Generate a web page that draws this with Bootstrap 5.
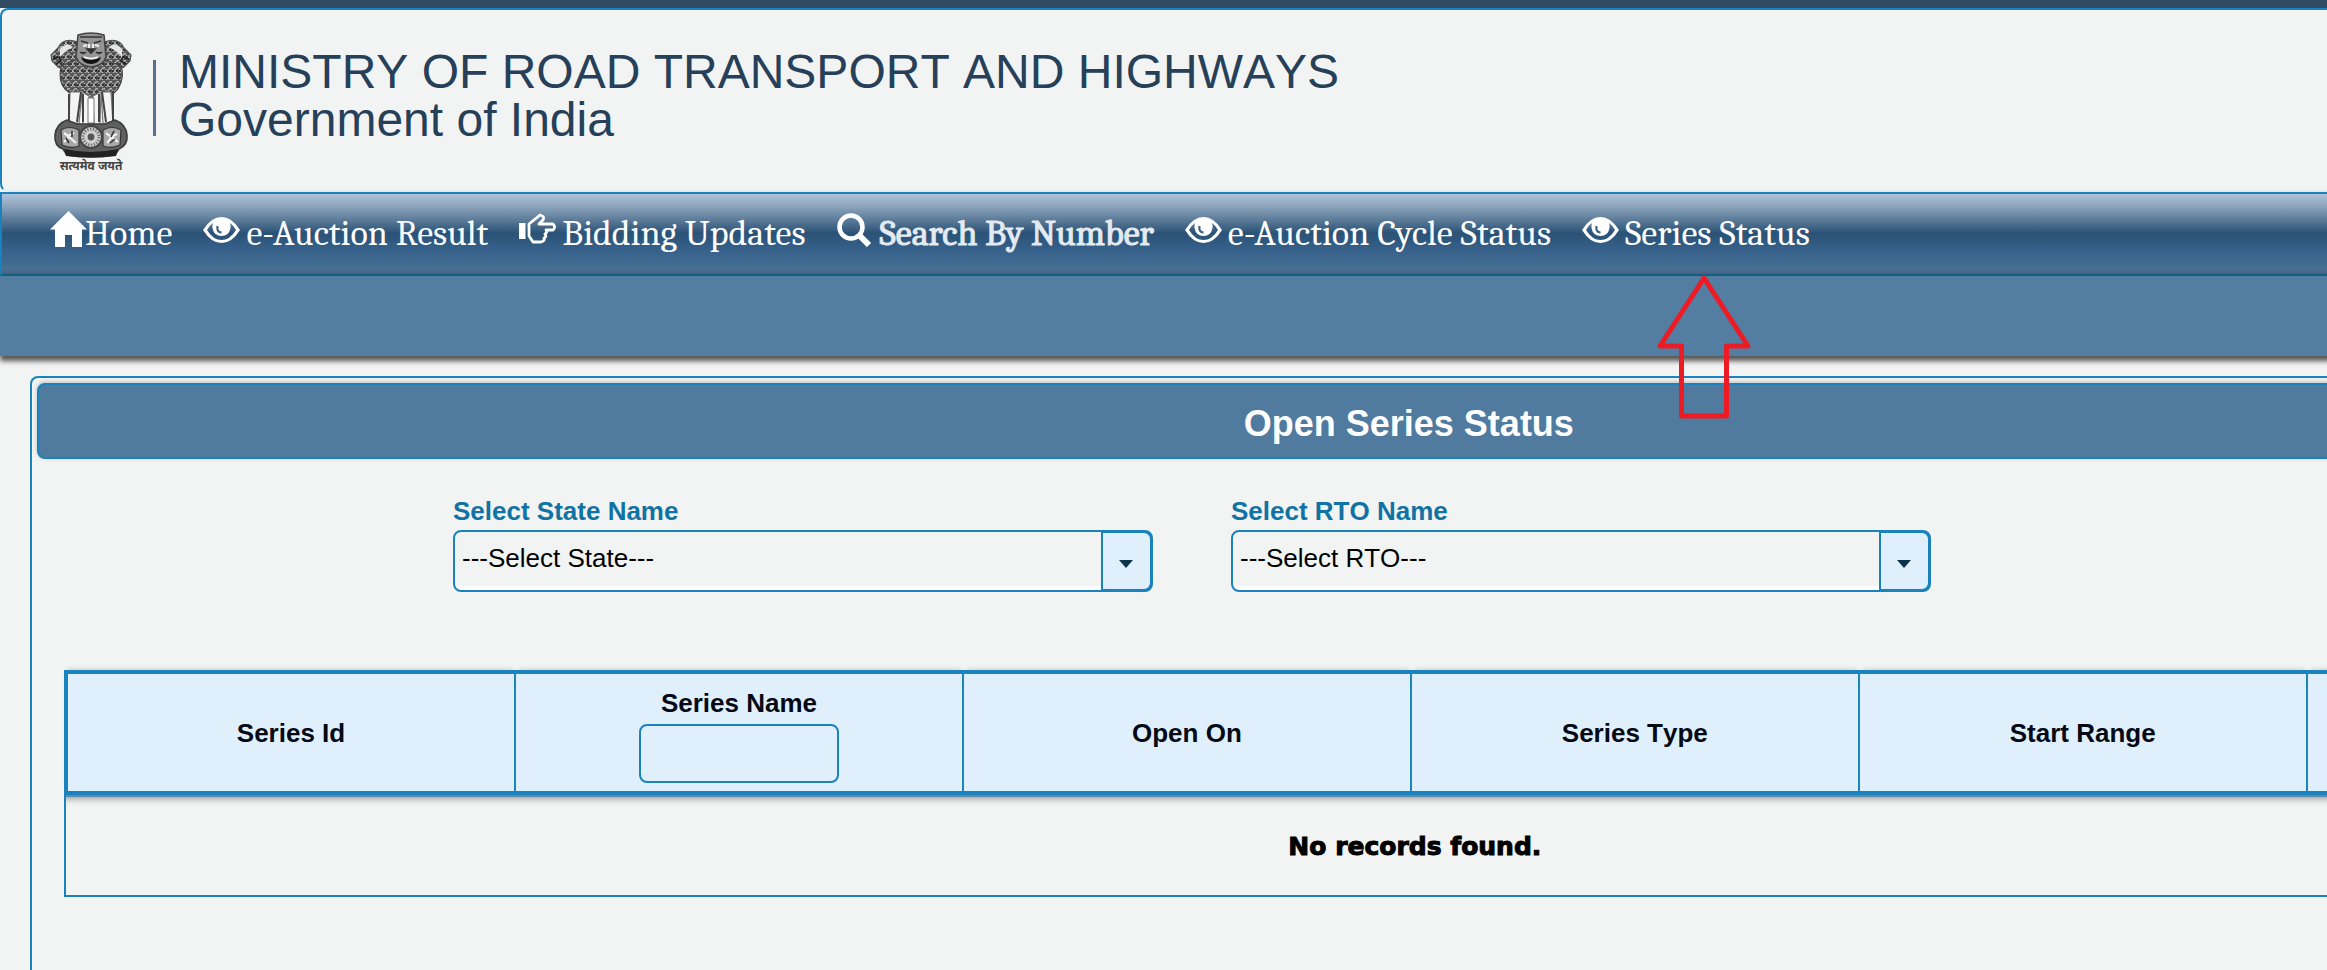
<!DOCTYPE html>
<html lang="en">
<head>
<meta charset="utf-8">
<meta name="viewport" content="width=device-width, initial-scale=1">
<title>Open Series Status</title>
<link href="https://cdn.jsdelivr.net/npm/bootstrap@5.3.0/dist/css/bootstrap.min.css" rel="stylesheet">
<style>
  :root { --edge: #1a82bd; --paper: #f2f4f3; --sky: #dfeffc; }
  body { background: var(--paper); color: #000; font: 26px/30px "Liberation Sans", Arial, sans-serif; font-kerning: none; }
  .page-shell { height: 100vh; }
  .wide { width: 121vw; }
  .top-strip { height: 8px; background: #304a63; }
  .site-head { height: 184px; border: 2px solid var(--edge); border-bottom-color: #e8ebeb; border-radius: 8px; padding-left: 47px; }
  .site-head .rule { width: 3px; height: 76px; background: #587089; margin: 50px 23px 0 20px; }
  .site-head h1 { font-size: 48px; line-height: 48px; color: #27405a; margin: 38px 0 0; font-weight: 400; }
  .emblem { width: 84px; height: 150px; margin-top: 22px; }
  .main-nav { height: 84px; padding: 19px 0 0 48px; border: 2px solid var(--edge); border-bottom-color: #00628c;
    background: linear-gradient(#b1c4dc 0, #8ba3bb 16%, #2b5276 49%, #36618a 70%, #476f94 94%, #4a6480 100%); }
  .main-nav .nav { gap: 31px; }
  .main-nav .nav-link { padding: 0; color: #fff; font: 36px/42px Cambria, Caladea, "Liberation Serif", serif; white-space: nowrap; }
  .main-nav .nav-link.current { color: #e3eaf1; -webkit-text-stroke: 1px #e3eaf1; }
  .main-nav svg.ico { width: 37px; height: 36px; margin: -2px 6px 0 0; flex: none; }
  .main-nav svg.tight { margin-right: -2px; }
  .pointer { position: absolute; left: 74px; top: 60px; width: 96px; height: 146px; z-index: 5; pointer-events: none; }
  .sub-bar { height: 80px; background: #537da1; box-shadow: 2px 3px 5px 2px #555; }
  .panel { margin: 20px 30px 0; padding: 5px; border: 2px solid var(--edge); border-bottom: 0; border-radius: 8px 8px 0 0; }
  .panel-title { margin: 0; height: 76px; padding: 5px 0 0 2px; font-size: 36px; line-height: 40px; font-weight: 700; color: #fff; background: #507a9e;
    border: 2px solid var(--edge); border-radius: 8px; box-shadow: 0 -1px 4px #bbb; }
  .filters { padding: 37px 0 0 416px; gap: 78px; }
  .filter { width: 700px; }
  .filter label { display: block; font-weight: 700; color: #1173a4; margin-bottom: 4px; }
  .combo { position: relative; }
  .combo select { height: 62px; padding: 0 60px 6px 7px; font: inherit; color: #000; border: 2px solid var(--edge); border-radius: 8px;
    background: linear-gradient(var(--paper) 54px, #fff 54px); }
  .combo span { position: absolute; right: 1px; top: 1px; bottom: 1px; width: 51px; border: 2px solid var(--edge); border-radius: 0 8px 8px 0; background: var(--sky); pointer-events: none; }
  .combo span::after { content: ""; position: absolute; left: 16px; top: 27px; border: 7px solid transparent; border-top: 8px solid #0b3349; border-bottom: 0; }
  .grid-wrap { padding: 78px 23px 0 27px; }
  .series { width: 100%; table-layout: fixed; border-collapse: separate; border-spacing: 0; text-align: center; }
  .series th { height: 125px; padding: 0; vertical-align: middle; background: var(--sky); color: #050914; border: solid var(--edge); border-width: 4px 2px 4px 0; box-shadow: 0 -4px 4px -3px #ccc; }
  .series th:first-child { width: 452px; border-left-width: 4px; }
  .series th.searchable { padding-top: 6px; }
  .series th label { display: block; }
  .series th input { display: block; width: 200px; height: 59px; margin: 6px auto 0; background: transparent; border: 2px solid var(--edge); border-radius: 8px; }
  .series td { height: 102px; padding: 3px 0 0 10px; vertical-align: middle; border: solid var(--edge); border-width: 0 2px 2px; font: 700 25px/30px "DejaVu Sans", Verdana, sans-serif;
    -webkit-text-stroke: 1px #000; box-shadow: inset 0 2px 0 #5f88a8, inset 0 10px 6px -6px #999; }
</style>
</head>
<body>
<div class="page-shell d-flex flex-column overflow-hidden">
  <div class="top-strip flex-shrink-0"></div>

  <header class="site-head wide d-flex align-items-start flex-shrink-0">
    <svg class="emblem" viewBox="0 0 84 150" role="img" aria-label="State Emblem of India">
      <defs>
        <pattern id="mane" width="7" height="7" patternUnits="userSpaceOnUse">
          <rect width="7" height="7" fill="#555"/>
          <path d="M0 2q2 3 4 0t4 0M1 6q2-3 4 0" stroke="#b5b5b5" stroke-width="1.3" fill="none"/>
          <path d="M0 4h2M5 3v2" stroke="#222" stroke-width="1.4"/>
        </pattern>
      </defs>
      <path d="M29 10Q14 5 9 16L2 23 3 29 9 35 13 37 29 39zM55 10Q70 5 75 16L82 23 81 29 75 35 71 37 55 39z" fill="url(#mane)" stroke="#555" stroke-width="1.2"/>
      <path d="M11 17q7-8 13-2l-7 4-6 6zM73 17q-7-8-13-2l7 4 6 6z" fill="#e4e4e4"/>
      <path d="M4 27l6-2 2 4-5 3M80 27l-6-2-2 4 5 3" stroke="#222" stroke-width="1.6" fill="none"/>
      <path d="M12 34Q9 49 16 57L23 63 33 58 42 67 51 58 62 64 69 57Q76 45 72 34L56 28H27z" fill="url(#mane)" stroke="#444" stroke-width="1.2"/>
      <path d="M29 3Q42-1 55 3L57 25Q54 34 42 35 30 34 27 25z" fill="#959595" stroke="#444" stroke-width="1.6"/>
      <path d="M31 5h22M32 9l7 2M52 9l-7 2M38 17h8l-4 4zM31 20q3 3 6 0M47 20q3 3 6 0" fill="#333" stroke="#333" stroke-width="1.6"/>
      <path d="M34 14l4-1M46 13l4 1M40 12v4M44 12v4" stroke="#eee" stroke-width="2"/>
      <path d="M32 25q10 6 20 0-2 7-10 7t-10-7z" fill="#111"/>
      <path d="M35 25q7 3 14 0" stroke="#f2f2f2" stroke-width="1.5" fill="none"/>
      <path d="M21 60L20 92 30 91 33 60zM33 60l1 34 6-2 0-28zM44 64l1 28 6 2 1-34zM52 60l2 31 10 1-2-32z" fill="#f4f4f4" stroke="#777" stroke-width="1.2"/>
      <path d="M20 62v29M34 62v28M50 62v28M64 62v29M32 60l-4 30M53 60l4 30" stroke="#444" stroke-width="2"/>
      <path d="M39 66h6v25h-6z" fill="#fff" stroke="#777" stroke-width="1"/>
      <path d="M18 88Q7 92 6 103 5 114 14 117L18 123Q42 127 66 123L70 117Q79 113 78 103 77 92 66 88L56 92H28z" fill="#606060" stroke="#3b3b3b" stroke-width="1.6"/>
      <path d="M12 98q8-5 18 0v16q-8 3-17-1zM54 98q9-5 18 0l-1 15q-9 4-17 1z" fill="#a8a8a8" stroke="#333" stroke-width="1.2"/>
      <path d="M15 101l4 3 6-3M15 110l5-5 7 6M57 101l5 4 6-3M58 111l5-6 6 5" stroke="#f2f2f2" stroke-width="2.200" fill="none"/>
      <path d="M17 106l3 5M23 99v6M65 99l-3 6M66 107l-5 4" stroke="#333" stroke-width="1.6"/>
      <circle cx="42" cy="105" r="11" fill="#d0d0d0" stroke="#444" stroke-width="2"/>
      <circle cx="42" cy="105" r="8" fill="none" stroke="#777" stroke-width="3" stroke-dasharray="1.4 1.4"/>
      <circle cx="42" cy="105" r="3.4" fill="#555"/>
      <path d="M15 117Q42 123 69 117L67 124Q42 127 17 124z" fill="#222"/>
      <text x="42" y="138" text-anchor="middle" font-size="12" font-weight="700" fill="#444" font-family="'Noto Sans Devanagari','Noto Sans',sans-serif">सत्यमेव जयते</text>
    </svg>
    <div class="rule"></div>
    <h1>MINISTRY OF ROAD TRANSPORT AND HIGHWAYS<br>Government of India</h1>
  </header>

  <svg class="d-none" aria-hidden="true">
    <symbol id="eye" viewBox="0 0 37 36">
      <path fill="#fff" fill-rule="evenodd" d="M0 13Q8 0 18.500 0T37 13Q29 26 18.500 26T0 13zM4 13Q10 23 18.500 23T33 13Q30 8 27 6Q28 9 27.500 11Q26 19 18.500 19T9.500 11Q9 9 10 6Q7 8 4 13z"/>
      <path d="M14.500 9q-1 6 4 6.500" fill="none" stroke="#3b6085" stroke-width="2.200"/>
    </symbol>
  </svg>

  <nav class="main-nav wide flex-shrink-0">
    <ul class="nav flex-nowrap">
      <li><a class="nav-link d-flex" href="#"><svg class="ico tight" viewBox="0 0 37 36"><path fill="#fff" d="M18.500 0L37 18.500H32V36H22V24H15V36H5V18.500H0z"/></svg>Home</a></li>
      <li><a class="nav-link d-flex" href="#"><svg class="ico"><use href="#eye" y="6"/></svg>e-Auction Result</a></li>
      <li><a class="nav-link d-flex" href="#"><svg class="ico" viewBox="0 0 37 36"><path fill="#fff" d="M0 12h6.500v16H0z"/><path fill="none" stroke="#fff" stroke-width="2.800" stroke-linejoin="round" d="M10 13L21 4Q26 5 24 9L20 13H34Q37 16 34 19H27Q29 21 26 23Q28 26 25 27Q26 30 22 31H14L10 25z"/></svg>Bidding Updates</a></li>
      <li><a class="nav-link current d-flex" href="#"><svg class="ico" viewBox="0 0 37 36"><circle cx="14" cy="16" r="11.500" fill="none" stroke="#fff" stroke-width="4.500"/><path d="M22 24L32 34" stroke="#fff" stroke-width="6"/></svg>Search By Number</a></li>
      <li><a class="nav-link d-flex" href="#"><svg class="ico"><use href="#eye" y="6"/></svg>e-Auction Cycle Status</a></li>
      <li class="position-relative"><a class="nav-link d-flex" href="#"><svg class="ico"><use href="#eye" y="6"/></svg>Series Status</a>
        <svg class="pointer" viewBox="0 0 96 146"><path d="M48 5L4 73H25.500V143H70.500V73H92z" fill="none" stroke="#ed1c24" stroke-width="5" stroke-linejoin="round"/></svg>
      </li>
    </ul>
  </nav>
  <div class="sub-bar wide flex-shrink-0"></div>

  <div class="wide d-flex flex-column flex-grow-1">
    <main class="panel flex-grow-1">
      <h2 class="panel-title d-flex align-items-center justify-content-center">Open Series Status</h2>

      <form class="filters d-flex">
        <div class="filter">
          <label for="state">Select State Name</label>
          <div class="combo">
            <select id="state" class="form-select"><option>---Select State---</option></select><span></span>
          </div>
        </div>
        <div class="filter">
          <label for="rto">Select RTO Name</label>
          <div class="combo">
            <select id="rto" class="form-select"><option>---Select RTO---</option></select><span></span>
          </div>
        </div>
      </form>

      <div class="grid-wrap">
        <table class="series">
          <thead>
            <tr>
              <th scope="col">Series Id</th>
              <th scope="col" class="searchable"><label for="series-name">Series Name</label><input id="series-name" type="text"></th>
              <th scope="col">Open On</th>
              <th scope="col">Series Type</th>
              <th scope="col">Start Range</th>
              <th scope="col"></th>
            </tr>
          </thead>
          <tbody>
            <tr><td colspan="6">No records found.</td></tr>
          </tbody>
        </table>
      </div>
    </main>
  </div>
</div>
<script src="https://cdn.jsdelivr.net/npm/bootstrap@5.3.0/dist/js/bootstrap.bundle.min.js"></script>
</body>
</html>
